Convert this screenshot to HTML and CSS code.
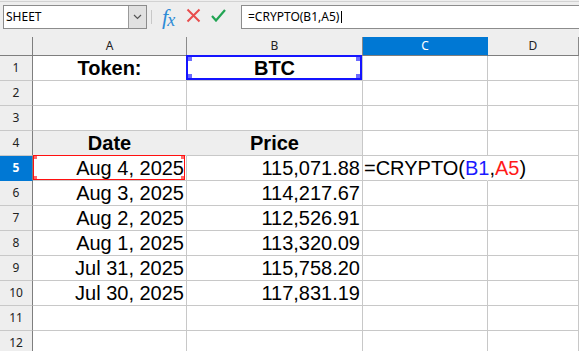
FILE: index.html
```html
<!DOCTYPE html>
<html lang="en">
<head>
  <meta charset="UTF-8">
  <title>SHEET - CRYPTO</title>
  <link rel="stylesheet" href="styles.css">
</head>
<body>
  <!-- Formelleiste -->
  <div class="toolbar">
    <div class="namebox">
      <span class="name">SHEET</span>
      <span class="drop">
        <svg width="9" height="6" viewBox="0 0 9 6"><path d="M1 1l3.5 3.5L8 1" fill="none" stroke="#555" stroke-width="1.2"/></svg>
      </span>
    </div>
    <span class="sep"></span>
    <span class="fx">f<span class="fx-x">x</span></span>
    <svg class="tool-icon" width="15" height="15" viewBox="0 0 15 15"><path d="M1.5 1.5l12 12M13.5 1.5l-12 12" stroke="#e84d4d" stroke-width="2" fill="none"/></svg>
    <svg class="tool-icon check" width="15" height="13" viewBox="0 0 15 13"><path d="M1 7l4 4.5L14 1" stroke="#21a453" stroke-width="2.2" fill="none"/></svg>
    <div class="formula">=CRYPTO(B1,A5)<span class="caret"></span></div>
  </div>

  <!-- Tabelle -->
  <div class="sheet">
    <div class="corner"></div>
    <div class="colhead">A</div>
    <div class="colhead">B</div>
    <div class="colhead active">C</div>
    <div class="colhead">D</div>

    <div class="rowhead">1</div>
    <div class="cell center bold">Token:</div>
    <div class="cell center bold">BTC<span class="ref ref-blue"><i></i><i></i><i></i><i></i></span></div>
    <div class="cell"></div>
    <div class="cell"></div>

    <div class="rowhead">2</div>
    <div class="cell"></div><div class="cell"></div><div class="cell"></div><div class="cell"></div>

    <div class="rowhead">3</div>
    <div class="cell"></div><div class="cell"></div><div class="cell"></div><div class="cell"></div>

    <div class="rowhead">4</div>
    <div class="cell center bold shade nosep">Date</div>
    <div class="cell center bold shade">Price</div>
    <div class="cell"></div>
    <div class="cell"></div>

    <div class="rowhead active">5</div>
    <div class="cell num">Aug 4, 2025<span class="ref ref-red"><i></i><i></i><i></i><i></i></span></div>
    <div class="cell num">115,071.88</div>
    <div class="cell edit nosep">=CRYPTO(<span class="c-blue">B1</span>,<span class="c-red">A5</span>)</div>
    <div class="cell"></div>

    <div class="rowhead">6</div>
    <div class="cell num">Aug 3, 2025</div>
    <div class="cell num">114,217.67</div>
    <div class="cell"></div><div class="cell"></div>

    <div class="rowhead">7</div>
    <div class="cell num">Aug 2, 2025</div>
    <div class="cell num">112,526.91</div>
    <div class="cell"></div><div class="cell"></div>

    <div class="rowhead">8</div>
    <div class="cell num">Aug 1, 2025</div>
    <div class="cell num">113,320.09</div>
    <div class="cell"></div><div class="cell"></div>

    <div class="rowhead">9</div>
    <div class="cell num">Jul 31, 2025</div>
    <div class="cell num">115,758.20</div>
    <div class="cell"></div><div class="cell"></div>

    <div class="rowhead">10</div>
    <div class="cell num">Jul 30, 2025</div>
    <div class="cell num">117,831.19</div>
    <div class="cell"></div><div class="cell"></div>

    <div class="rowhead">11</div>
    <div class="cell"></div><div class="cell"></div><div class="cell"></div><div class="cell"></div>

    <div class="rowhead">12</div>
    <div class="cell"></div><div class="cell"></div><div class="cell"></div><div class="cell"></div>
  </div>
</body>
</html>
```

FILE: styles.css
```css
* {
  box-sizing: border-box;
}
body {
  margin: 0;
  width: 579px;
  height: 351px;
  overflow: hidden;
  background: #fff;
  font-family: 'Liberation Sans', Arial, sans-serif;
  color: #000;
}

/* Formelleiste */
.toolbar {
  height: 37px;
  background: #eeeeee;
  box-shadow: inset 0 1px #eeeeee, inset 0 2px #d2d2d2;
  display: flex;
  align-items: flex-start;
  padding: 5px 0 0 3px;
  overflow: hidden;
}
.toolbar > * {
  flex-shrink: 0;
}
.namebox {
  width: 144px;
  height: 24px;
  border: 1px solid #8c8c8c;
  background: #fff;
  display: flex;
}
.name {
  flex: 1;
  font-family: 'Noto Sans', sans-serif;
  font-size: 12px;
  line-height: 22px;
  padding-left: 2px;
}
.drop {
  width: 18px;
  background: #e1e1e1;
  border-left: 1px solid #9a9a9a;
  display: flex;
  align-items: center;
  justify-content: center;
}
.sep {
  width: 1px;
  height: 14px;
  margin: 5px 10px 0 4px;
  background: #c8c8c8;
}
.fx {
  font-family: 'Liberation Serif', serif;
  font-style: italic;
  font-size: 22px;
  line-height: 20px;
  color: #2d8bd6;
  margin-top: 2px;
  width: 15px;
  letter-spacing: -1px;
}
.fx-x {
  font-size: 18px;
  position: relative;
  top: 2px;
}
.tool-icon {
  margin: 3px 0 0 9px;
}
.check {
  margin: 4px 0 0 10px;
}
.formula {
  width: 400px;
  height: 24px;
  margin-left: 15px;
  border: 1px solid #8c8c8c;
  background: #fff;
  font-family: 'Noto Sans', sans-serif;
  font-size: 12px;
  line-height: 22px;
  padding-left: 6px;
  display: flex;
  align-items: center;
}
.caret {
  width: 1px;
  height: 12px;
  margin-left: 2px;
  background: #000;
}

/* Tabelle */
.sheet {
  display: grid;
  grid-template-columns: 33px 154px 176px 125px 1fr;
  grid-template-rows: 19px repeat(12, 25px);
}
.corner {
  background: #eeeeee;
  border-right: 1px solid #7e7e7e;
  border-bottom: 1px solid #7e7e7e;
}
.colhead {
  background: #eeeeee;
  border-right: 1px solid #8a8a8a;
  border-bottom: 1px solid #7e7e7e;
  font-family: 'Noto Sans', sans-serif;
  font-size: 12px;
  line-height: 18px;
  text-align: center;
  color: #222;
}
.colhead.active {
  background: #0078d4;
  color: #fff;
  border-right-color: #0078d4;
}
.rowhead {
  background: #eeeeee;
  border-right: 1px solid #7e7e7e;
  border-bottom: 1px solid #c8c8c8;
  font-family: 'Noto Sans', sans-serif;
  font-size: 12px;
  line-height: 24px;
  text-align: center;
  color: #222;
}
.rowhead.active {
  background: #0078d4;
  color: #fff;
  font-weight: bold;
  border-bottom-color: #0078d4;
}
.cell {
  position: relative;
  border-right: 1px solid #c8c8c8;
  border-bottom: 1px solid #c8c8c8;
  font-size: 20px;
  line-height: 24px;
  white-space: nowrap;
  padding: 0 2px;
}
.cell.center {
  text-align: center;
}
.cell.bold {
  font-weight: bold;
}
.cell.num {
  text-align: right;
}
.cell.shade {
  background: #eeeeee;
}
.cell.nosep {
  border-right-color: transparent;
}
.cell.shade.nosep {
  border-right-color: #eeeeee;
}
.cell.edit {
  overflow: visible;
  z-index: 1;
  padding-left: 1px;
}
.c-blue {
  color: #1a1aff;
}
.c-red {
  color: #ff1a1a;
}

/* Referenzrahmen */
.ref {
  position: absolute;
  pointer-events: none;
}
.ref i {
  position: absolute;
  width: 4px;
  height: 4px;
}
.ref i:nth-child(1) { top: 0; left: 0; }
.ref i:nth-child(2) { top: 0; right: 0; }
.ref i:nth-child(3) { bottom: 0; left: 0; }
.ref i:nth-child(4) { bottom: 0; right: 0; }
.ref-blue {
  top: -1px;
  left: -1px;
  right: 0;
  bottom: 0;
  border: 2px solid #1414ff;
}
.ref-blue i {
  background: #6b6bff;
}
.ref-red {
  top: -1px;
  left: 0;
  right: 1px;
  bottom: 0;
  border: 1px solid #ff1010;
}
.ref-red i {
  width: 3px;
  height: 3px;
  background: #ff6b6b;
}
```
